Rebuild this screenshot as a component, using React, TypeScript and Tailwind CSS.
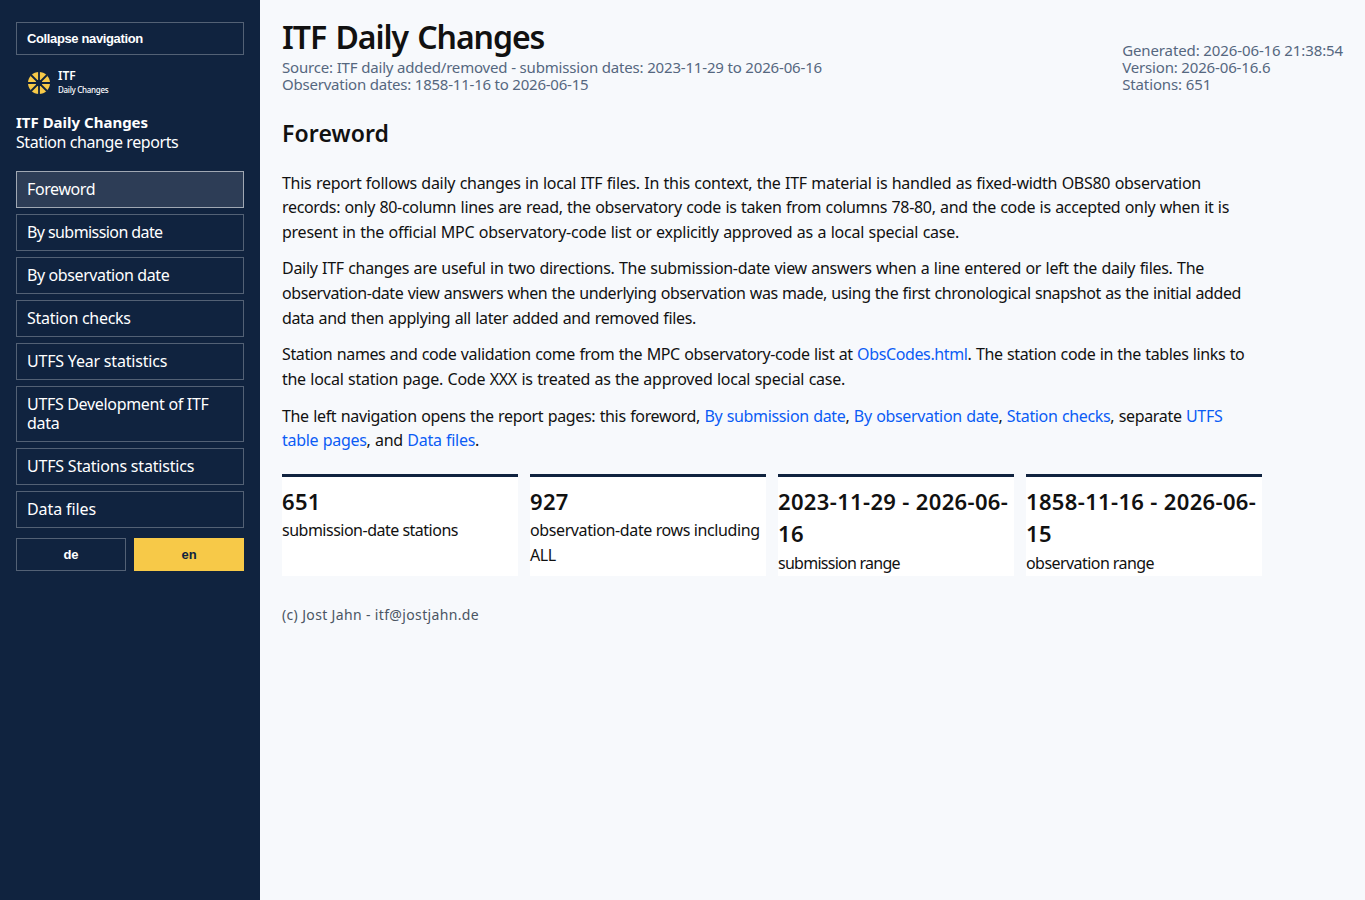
import React from 'react';

const navItems = [
    { label: 'Foreword', fit: 'tracking-[-0.4px]' },
    { label: 'By submission date', fit: 'tracking-[-0.58px]' },
    { label: 'By observation date', fit: 'tracking-[-0.4px]' },
    { label: 'Station checks', fit: 'tracking-[-0.28px]' },
    { label: 'UTFS Year statistics', fit: 'tracking-[-0.2px]' },
    { label: 'UTFS Development of ITF data', fit: 'tracking-[-0.32px]' },
    { label: 'UTFS Stations statistics', fit: 'tracking-[-0.2px]' },
    { label: 'Data files', fit: 'tracking-[-0.1px]' },
];

const cards = [
    { value: '651', label: 'submission-date stations', fit: 'tracking-[-0.5px]' },
    { value: '927', label: 'observation-date rows including ALL', fit: 'tracking-[-0.39px]' },
    { value: '2023-11-29 - 2026-06-16', label: 'submission range', fit: 'tracking-[-0.74px]' },
    { value: '1858-11-16 - 2026-06-15', label: 'observation range', fit: 'tracking-[-0.56px]' },
];

function A({ children }: { children: React.ReactNode }) {
    return (
        <a href="#" className="text-[#0b5cf5]">
            {children}
        </a>
    );
}

/** One set line of running text, with its own letter fit. */
function Line({ fit, children }: { fit: string; children: React.ReactNode }) {
    return <span className={`block whitespace-nowrap ${fit}`}>{children}</span>;
}

function Logo() {
    return (
        <div className="mt-[11px] flex h-[33px] items-center gap-2 pl-3">
            <svg viewBox="-11 -11 22 22" className="size-[22px]">
                <circle r="11" fill="#f7c948" />
                <path d="M0-11V11M-11 0H11M-8-8L8 8M8-8L-8 8" stroke="#10233f" strokeWidth="1.8" />
                <circle r="3.2" fill="#10233f" />
            </svg>
            <div>
                <div className="text-[12px] leading-[14px] font-semibold">ITF</div>
                <div className="text-[8px] leading-[13px] font-medium tracking-[-0.3px]">Daily Changes</div>
            </div>
        </div>
    );
}

function Sidebar() {
    return (
        <aside className="w-[260px] shrink-0 bg-[#10233f] px-4 pt-[22px] text-white">
            <button className="block w-full border border-white/28 px-2.5 py-2 text-left font-['Liberation_Sans',sans-serif] text-[13px] leading-[15px] font-bold tracking-[-0.37px]">
                Collapse navigation
            </button>
            <Logo />
            <div className="mt-[13px] text-[16px] leading-[20px]">
                <strong className="block text-[15px]">ITF Daily Changes</strong>
                <span className="block tracking-[-0.42px]">Station change reports</span>
            </div>
            <nav className="mt-[19px] flex flex-col gap-1.5 text-[16px] leading-[19px]">
                {navItems.map((item, i) => (
                    <a
                        key={item.label}
                        href="#"
                        className={`border px-2.5 py-2 ${item.fit} ${i === 0 ? 'border-white/55 bg-white/12' : 'border-white/28'}`}
                    >
                        {item.label}
                    </a>
                ))}
            </nav>
            <div className="mt-2.5 grid grid-cols-2 gap-2 font-['Liberation_Sans',sans-serif] text-[13px] leading-[15px] font-bold">
                <button className="border border-white/28 py-2">de</button>
                <button className="border border-[#f7c948] bg-[#f7c948] py-2 text-[#10233f]">en</button>
            </div>
        </aside>
    );
}

export default function App() {
    return (
        <div className="flex min-h-screen bg-[#f7f9fc] font-['Noto_Sans',sans-serif] text-[#111]">
            <Sidebar />
            <main className="flex-1 px-[22px] pt-[18px]">
                <header className="flex items-end justify-between">
                    <div>
                        <h1 className="mb-1 text-[32px] leading-[37px] font-semibold tracking-[-1.05px] [word-spacing:2px]">ITF Daily Changes</h1>
                        <div className="text-[15px] leading-[17px] text-[#55677f]">
                            <Line fit="tracking-[-0.17px]">
                                Source: ITF daily added/removed - submission dates: 2023-11-29 to 2026-06-16
                            </Line>
                            <Line fit="tracking-[-0.22px]">Observation dates: 1858-11-16 to 2026-06-15</Line>
                        </div>
                    </div>
                    <div className="text-[15px] leading-[17px] tracking-[-0.12px] text-[#55677f]">
                        <Line fit="tracking-[-0.11px]">Generated: 2026-06-16 21:38:54</Line>
                        <Line fit="tracking-[-0.16px]">Version: 2026-06-16.6</Line>
                        <Line fit="tracking-[-0.12px]">Stations: 651</Line>
                    </div>
                </header>

                <article className="mt-[22px] max-w-[980px] text-[16px] leading-[24.65px]">
                    <h2 className="mb-[19.5px] text-[23px] leading-[36px] font-semibold tracking-[0.1px]">Foreword</h2>
                    <div className="space-y-3 [word-spacing:0.6px]">
                        <p>
                            <Line fit="tracking-[-0.287px]">
                                This report follows daily changes in local ITF files. In this context, the ITF material is handled as fixed-width OBS80 observation
                            </Line>
                            <Line fit="tracking-[-0.332px]">
                                records: only 80-column lines are read, the observatory code is taken from columns 78-80, and the code is accepted only when it is
                            </Line>
                            <Line fit="tracking-[-0.259px]">
                                present in the official MPC observatory-code list or explicitly approved as a local special case.
                            </Line>
                        </p>
                        <p>
                            <Line fit="tracking-[-0.303px]">
                                Daily ITF changes are useful in two directions. The submission-date view answers when a line entered or left the daily files. The
                            </Line>
                            <Line fit="tracking-[-0.428px]">
                                observation-date view answers when the underlying observation was made, using the first chronological snapshot as the initial added
                            </Line>
                            <Line fit="tracking-[-0.348px]">data and then applying all later added and removed files.</Line>
                        </p>
                        <p>
                            <Line fit="tracking-[-0.375px]">
                                Station names and code validation come from the MPC observatory-code list at <A>ObsCodes.html</A>. The station code in the tables links to
                            </Line>
                            <Line fit="tracking-[-0.274px]">
                                the local station page. Code XXX is treated as the approved local special case.
                            </Line>
                        </p>
                        <p>
                            <Line fit="tracking-[-0.34px]">
                                The left navigation opens the report pages: this foreword, <A>By submission date</A>, <A>By observation date</A>,{' '}
                                <A>Station checks</A>, separate <A>UTFS</A>
                            </Line>
                            <Line fit="tracking-[-0.296px]">
                                <A>table pages</A>, and <A>Data files</A>.
                            </Line>
                        </p>
                    </div>

                    <div className="mt-[20.5px] grid grid-cols-4 gap-3">
                        {cards.map((c) => (
                            <div key={c.label} className="border-t-[3px] border-[#10233f] bg-white pt-2">
                                <strong className="mb-[1.5px] block text-[22px] leading-[32.4px] font-semibold tracking-[0.35px]">{c.value}</strong>
                                <span className={`block ${c.fit}`}>{c.label}</span>
                            </div>
                        ))}
                    </div>
                </article>

                <footer className="mt-7 text-[14px] leading-[22px] tracking-[0.35px] text-[#4b5563]">(c) Jost Jahn - itf@jostjahn.de</footer>
            </main>
        </div>
    );
}
